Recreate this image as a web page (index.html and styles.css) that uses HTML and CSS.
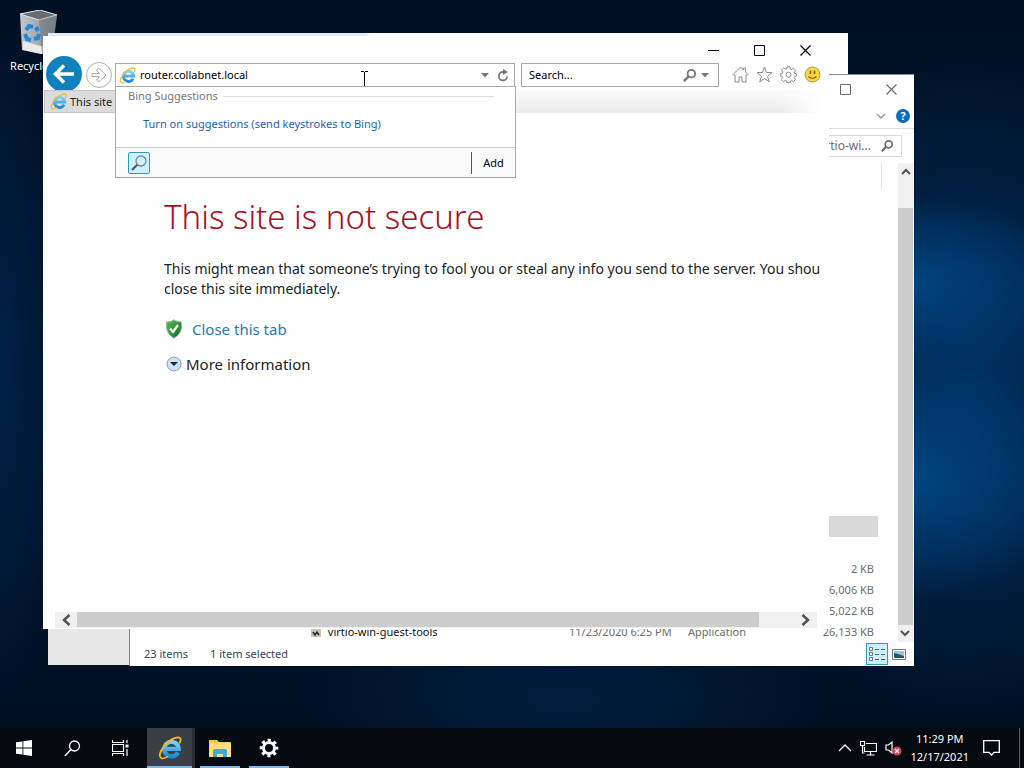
FILE: index.html
```html
<!DOCTYPE html>
<html lang="en">
<head>
    <meta charset="UTF-8">
    <meta name="viewport" content="width=device-width, initial-scale=1.0">
    <title>Desktop</title>
    <link rel="stylesheet" href="styles.css">
</head>
<body>
    <!-- shared icons -->
    <svg class="defs" aria-hidden="true">
        <defs>
            <linearGradient id="ie-blue" x1="0" y1="0" x2="0" y2="1">
                <stop offset="0" stop-color="#7fd6fb"/>
                <stop offset="1" stop-color="#1c8ad6"/>
            </linearGradient>
            <linearGradient id="shield-green" x1="0" y1="0" x2="1" y2="1">
                <stop offset="0" stop-color="#5cc05a"/>
                <stop offset="1" stop-color="#0c6b1d"/>
            </linearGradient>
            <linearGradient id="bin-side" x1="0" y1="0" x2="1" y2="0">
                <stop offset="0" stop-color="#c3c8cd"/>
                <stop offset="1" stop-color="#80868c"/>
            </linearGradient>
        </defs>
        <symbol id="ie" viewBox="0 0 24 24">
            <path d="M20 16.500a7.300 7.300 0 1 1 .8-3.700H8" fill="none" stroke="url(#ie-blue)" stroke-width="4.200"/>
            <path d="M3.400 22.200C-.8 20 4.200 10.200 11 5.200 16 1.500 21.400.300 22.400 2.600c.5 1.200.1 2.700-.6 4" fill="none" stroke="#f2b92b" stroke-width="1.800" stroke-linecap="round"/>
            <path d="M3.400 22.200c1.800.8 4-.200 6-1.600" fill="none" stroke="#f2b92b" stroke-width="1.600" stroke-linecap="round"/>
        </symbol>
        <symbol id="magnifier" viewBox="0 0 16 16">
            <circle cx="10" cy="6" r="4" fill="none" stroke="currentColor" stroke-width="2"/>
            <path d="M7 9l-5 5" stroke="currentColor" stroke-width="2.500"/>
        </symbol>
        <symbol id="maximize" viewBox="0 0 11 11">
            <path d="M.5.5h10v10H.5z" fill="none" stroke="currentColor"/>
        </symbol>
        <symbol id="close" viewBox="0 0 11 11">
            <path d="M.5.5l10 10m0-10l-10 10" stroke="currentColor" stroke-width="1.200"/>
        </symbol>
        <symbol id="chevron" viewBox="0 0 12 12">
            <path d="M2 8l4-4 4 4" fill="none" stroke="currentColor" stroke-width="2"/>
        </symbol>
    </svg>

    <main class="desktop">
        <a class="shortcut" href="#recycle">
            <svg width="40" height="44" viewBox="0 0 40 44">
                <path d="M1 4l20-4 17 5-5 37-10 2-20-4z" fill="url(#bin-side)"/>
                <path d="M1 4l20-4 17 5-18 5z" fill="#666c72" stroke="#e2e5e8"/>
                <path d="M4 31l14 4 14 3-1 4-9 2-18-4z" fill="#eee9ea"/>
                <path d="M20 10l3 34 10-2 5-37z" fill="#70767c" opacity=".6"/>
                <path d="M7 20l3-4 4 1M6 24l2 5 4 1m3-1l4-1 1-4m-1-3l-2-4" fill="none" stroke="#2388d8" stroke-width="4"/>
            </svg>
            <span>Recycle Bin</span>
        </a>

        <section class="window settings">
            <div class="settings-side"></div>
        </section>

        <section class="window explorer">
            <div class="explorer-caption">
                <button class="icon-btn" aria-label="Maximize"><svg width="11" height="11"><use href="#maximize"/></svg></button>
                <button class="icon-btn" aria-label="Close"><svg width="11" height="11"><use href="#close"/></svg></button>
            </div>
            <div class="ribbon">
                <button class="icon-btn" aria-label="Expand ribbon">
                    <svg width="10" height="6" viewBox="0 0 10 6"><path d="M1 1l4 4 4-4" fill="none" stroke="#999" stroke-width="1.300"/></svg>
                </button>
                <button class="help" aria-label="Help">?</button>
            </div>
            <div class="explorer-search">
                <label class="explorer-field">
                    <input class="explorer-input" type="text" aria-label="Search folder" value="Search virtio-wi...">
                    <svg width="14" height="14"><use href="#magnifier"/></svg>
                </label>
            </div>
            <div class="explorer-body">
                <div class="files">
                    <div class="files-head"></div>
                    <table class="file-table">
                        <tbody>
                            <tr class="selected"><td></td><td></td><td></td><td></td></tr>
                            <tr><td></td><td></td><td></td><td></td></tr>
                            <tr><td></td><td></td><td></td><td class="size">2 KB</td></tr>
                            <tr><td></td><td></td><td></td><td class="size">6,006 KB</td></tr>
                            <tr><td></td><td></td><td></td><td class="size">5,022 KB</td></tr>
                            <tr>
                                <td class="name">
                                    <svg width="10" height="12" viewBox="0 0 10 12"><path d="M0 0h10v10H0z" fill="#c4c4bd"/><path d="M2 5l2 3 2-3 2 3" fill="none" stroke="#222" stroke-width="1.500"/></svg>
                                    virtio-win-guest-tools
                                </td>
                                <td class="date">11/23/2020 6:25 PM</td>
                                <td class="type">Application</td>
                                <td class="size">26,133 KB</td>
                            </tr>
                        </tbody>
                    </table>
                </div>
                <div class="vscroll">
                    <button class="icon-btn" aria-label="Scroll up"><svg width="12" height="12"><use href="#chevron"/></svg></button>
                    <div class="vthumb"></div>
                    <button class="icon-btn flip" aria-label="Scroll down"><svg width="12" height="12"><use href="#chevron"/></svg></button>
                </div>
            </div>
            <footer class="status">
                <span>23 items</span>
                <span>1 item selected</span>
                <button class="view-btn active" aria-label="Details view">
                    <svg width="18" height="14" viewBox="0 0 18 14">
                        <path d="M1.500.500h3v3h-3zM1.500 5.500h3v3h-3zM1.500 10.500h3v3h-3z" fill="#fff" stroke="#68777f"/>
                        <path d="M7 2.500h4m2 0h4M7 7.500h4m2 0h4M7 12.500h4m2 0h4" stroke="#506872"/>
                    </svg>
                </button>
                <button class="view-btn" aria-label="Thumbnail view">
                    <svg width="14" height="11" viewBox="0 0 14 11">
                        <path d="M.5.500h13v10H.5z" fill="#fff" stroke="#5f8193"/>
                        <path d="M2 2h10v7H2z" fill="#9cc7e4"/>
                        <path d="M2 4l4 1 6 2v2H2z" fill="#33505c"/>
                    </svg>
                </button>
            </footer>
        </section>

        <section class="window browser">
            <div class="caption">
                <button class="icon-btn" aria-label="Minimize"><svg width="11" height="11" viewBox="0 0 11 11"><path d="M0 5.500h11" stroke="#000"/></svg></button>
                <button class="icon-btn" aria-label="Maximize"><svg width="11" height="11"><use href="#maximize"/></svg></button>
                <button class="icon-btn" aria-label="Close"><svg width="11" height="11"><use href="#close"/></svg></button>
            </div>

            <div class="nav">
                <button class="back" aria-label="Back">
                    <svg width="22" height="20" viewBox="0 0 22 20"><path d="M21 10H3M11 1.500L2.500 10l8.500 8.500" fill="none" stroke="#fff" stroke-width="3.500"/></svg>
                </button>
                <button class="forward" aria-label="Forward">
                    <svg width="16" height="14" viewBox="0 0 16 14"><path d="M1 5.500h7.500L5.500 2l1.500-1.300h1.500L15 7l-6.500 6.300H7L5.500 12l3-3.500H1z" fill="none" stroke="#aaa"/></svg>
                </button>
                <div class="address">
                    <svg width="17" height="17"><use href="#ie"/></svg>
                    <input class="address-input" type="text" aria-label="Address" value="router.collabnet.local">
                    <button class="icon-btn" aria-label="Show address list"><svg width="8" height="5" viewBox="0 0 8 5"><path d="M0 0h8L4 4.500z" fill="#777"/></svg></button>
                    <button class="icon-btn" aria-label="Refresh">
                        <svg width="12" height="13" viewBox="0 0 12 13"><path d="M7.500 3H6a4.200 4.200 0 1 0 4.200 4.500" fill="none" stroke="#777" stroke-width="1.800"/><path d="M6 0l5 3-5 3z" fill="#777"/></svg>
                    </button>
                    <div class="suggest">
                        <div class="suggest-title">Bing Suggestions</div>
                        <a class="suggest-link" href="#suggestions">Turn on suggestions (send keystrokes to Bing)</a>
                        <div class="suggest-bar">
                            <button class="provider" aria-label="Bing">
                                <svg width="18" height="18" viewBox="0 0 18 18">
                                    <path d="M7.500 10.500L2 16" stroke="#555" stroke-width="2.200"/>
                                    <circle cx="11" cy="7" r="5" fill="#d4f0fc" stroke="#72889f" stroke-width="1.300"/>
                                </svg>
                            </button>
                            <button class="add">Add</button>
                        </div>
                    </div>
                </div>
                <div class="search">
                    <input class="search-input" type="text" aria-label="Search" placeholder="Search...">
                    <button class="icon-btn" aria-label="Search"><svg width="15" height="15"><use href="#magnifier"/></svg></button>
                    <button class="icon-btn" aria-label="Search options"><svg width="8" height="5" viewBox="0 0 8 5"><path d="M0 0h8L4 4.500z" fill="#777"/></svg></button>
                </div>
                <div class="tools">
                    <button class="icon-btn" aria-label="Home">
                        <svg width="17" height="17" viewBox="0 0 17 17"><path d="M1 8.500l7.500-7.500 3 3V2h2v4l2.500 2.500-1 1-1-.8V16H10v-5H7v5H3V8.700l-1 .8z" fill="none" stroke="#8c8c8c"/></svg>
                    </button>
                    <button class="icon-btn" aria-label="Favorites">
                        <svg width="17" height="17" viewBox="0 0 17 17"><path d="M8.500 1l2 5.500H16l-4.500 3.700 1.800 5.800-4.800-3.500L3.700 16l1.800-5.800L1 6.500h5.500z" fill="none" stroke="#8c8c8c"/></svg>
                    </button>
                    <button class="icon-btn" aria-label="Tools">
                        <svg width="17" height="17" viewBox="0 0 17 17"><path d="M7 .8h3l.4 2.200 1.200.5 2-1.300 2 2-1.300 2 .5 1.200 1.800.4v2l-1.800.5-.6 1.300 1.200 2-2 2-2-1.200-1 .5-.4 2H7l-.5-2-1.200-.5-2 1.200-2-2 1.300-2-.5-1.300L.6 10V7.500l1.700-.4.5-1.200-1.300-2 2-2 2 1.300L6.600 3z" fill="none" stroke="#8c8c8c"/><circle cx="8.500" cy="8.700" r="2.500" fill="none" stroke="#8c8c8c"/></svg>
                    </button>
                    <button class="icon-btn" aria-label="Send a smile">
                        <svg width="17" height="17" viewBox="0 0 17 17"><circle cx="8.500" cy="8.500" r="7.500" fill="#fbd83a" stroke="#a99a55"/><path d="M6.500 4.500V8m4-3.500V8" stroke="#806515" stroke-width="1.600"/><path d="M4.500 10.500q4 3.500 8 0" fill="none" stroke="#806515" stroke-width="1.200"/></svg>
                    </button>
                </div>
            </div>

            <div class="tabs">
                <button class="tab"><svg width="17" height="17"><use href="#ie"/></svg>This site</button>
            </div>

            <article class="page">
                <h1 class="page-title">This site is not secure</h1>
                <p class="page-text">This might mean that someone’s trying to fool you or steal any info you send to the server. You shou<br>close this site immediately.</p>
                <a class="page-close" href="#close">
                    <svg width="18" height="20" viewBox="0 0 18 20">
                        <path d="M9 .8c2.500 1.700 5 2.200 7.500 2.200.5 7-.5 12-7.500 16.200C2 15 1 10 1.500 3 4 3 6.500 2.500 9 .8z" fill="url(#shield-green)" stroke="#a4b5a5"/>
                        <path d="M5 9.500l3 3.500 5-7" fill="none" stroke="#fff" stroke-width="2.200"/>
                    </svg>
                    Close this tab
                </a>
                <button class="page-more">
                    <svg width="16" height="16" viewBox="0 0 16 16"><circle cx="8" cy="8" r="7" fill="#cfe2f5" stroke="#8a9db3"/><path d="M4 6h8l-4 4z" fill="#10284a"/></svg>
                    More information
                </button>
            </article>

            <div class="hscroll">
                <button class="icon-btn left" aria-label="Scroll left"><svg width="10" height="12" viewBox="0 0 10 12"><path d="M8.500 1L3 6l5.500 5" fill="none" stroke="#505050" stroke-width="2.500"/></svg></button>
                <div class="htrack"><div class="hthumb"></div></div>
                <button class="icon-btn right" aria-label="Scroll right"><svg width="10" height="12" viewBox="0 0 10 12"><path d="M1.500 1L7 6l-5.500 5" fill="none" stroke="#505050" stroke-width="2.500"/></svg></button>
            </div>
        </section>

        <svg class="pointer" width="7" height="16" viewBox="0 0 7 16"><path d="M0 .5h3m1 0h3M3.500 1v14M0 15.500h3m1 0h3" stroke="#000"/></svg>
    </main>

    <nav class="taskbar">
        <button class="task" aria-label="Start">
            <svg width="16" height="16" viewBox="0 0 16 16"><path d="M0 2.300L6.500 1.400v6.200H0zM7.300 1.300L16 0v7.600H7.300zM0 8.400h6.500v6.200L0 13.700zM7.300 8.400H16V16l-8.700-1.300z" fill="#fff"/></svg>
        </button>
        <button class="task" aria-label="Search">
            <svg width="17" height="17" viewBox="0 0 17 17"><circle cx="10.500" cy="6" r="5" fill="none" stroke="#fff" stroke-width="1.300"/><path d="M7 9.500L.8 16" stroke="#fff" stroke-width="1.500"/></svg>
        </button>
        <button class="task" aria-label="Task view">
            <svg width="17" height="16" viewBox="0 0 17 16"><path d="M.5 0v2.500h11V0M.5 16v-2.500h11V16M.5 4.500h11v7H.5zM15 0v3m0 6v7" fill="none" stroke="#fff" stroke-width="1.200"/><path d="M13.500 4.500h3v3h-3z" fill="#fff"/></svg>
        </button>
        <button class="task app current" aria-label="Internet Explorer"><svg width="24" height="24"><use href="#ie"/></svg></button>
        <button class="task app" aria-label="File Explorer">
            <svg width="22" height="18" viewBox="0 0 22 18"><path d="M0 1h8l2 2h11q1 0 1 1v13H0z" fill="#f5c84f"/><path d="M1 4h21v14H0z" fill="#fddf82"/><path d="M4 18v-6q0-2 2-2h10q2 0 2 2v6h-4v-3H8v3z" fill="#3fa9d8"/></svg>
        </button>
        <button class="task app" aria-label="Settings">
            <svg width="20" height="20" viewBox="0 0 20 20"><circle cx="10" cy="10" r="5.500" fill="none" stroke="#fff" stroke-width="3"/><circle cx="10" cy="10" r="7.800" fill="none" stroke="#fff" stroke-width="3" stroke-dasharray="3.100 3.026" stroke-dashoffset="1.550"/></svg>
        </button>
        <div class="tray">
            <button class="icon-btn" aria-label="Show hidden icons"><svg width="14" height="8" viewBox="0 0 14 8"><path d="M1 7l6-6 6 6" fill="none" stroke="#fff" stroke-width="1.300"/></svg></button>
            <button class="icon-btn" aria-label="Network">
                <svg width="17" height="15" viewBox="0 0 17 15"><path d="M6 2.500h10.500v8H4.500V6M10.500 10.500v3m-4 .5h8M.5.500h4v4h-4zM2.500 4.500V12h2" fill="none" stroke="#fff" stroke-width="1.200"/></svg>
            </button>
            <button class="icon-btn" aria-label="Volume">
                <svg width="17" height="16" viewBox="0 0 17 16"><path d="M1 5h2.500L7 2v11l-3.500-3H1z" fill="none" stroke="#fff" stroke-width="1.200"/><circle cx="12" cy="11" r="4.500" fill="#d4404d"/><path d="M10 9l4 4m0-4l-4 4" stroke="#fff" stroke-width="1.200"/></svg>
            </button>
            <time class="clock" datetime="2021-12-17T23:29">11:29 PM<br>12/17/2021</time>
            <button class="icon-btn" aria-label="Notifications"><svg width="17" height="16" viewBox="0 0 17 16"><path d="M.7.700h15.600v11.600H11L8.500 15 6 12.300H.7z" fill="none" stroke="#fff" stroke-width="1.300"/></svg></button>
        </div>
        <button class="show-desktop" aria-label="Show desktop"></button>
    </nav>
</body>
</html>
```
FILE: styles.css
```css
* {
    box-sizing: border-box;
}
body {
    display: flex;
    flex-direction: column;
    height: 100vh;
    margin: 0;
    overflow: hidden;
    font-family: "Noto Sans", "Open Sans", sans-serif;
    font-size: 11px;
    line-height: 16px;
    color: #222;
}
button, input {
    margin: 0;
    padding: 0;
    border: none;
    background: none;
    font: inherit;
    color: inherit;
}
input {
    min-width: 0;
    outline: none;
}
a {
    text-decoration: none;
}
svg {
    flex: none;
}
.defs {
    position: absolute;
    width: 0;
    height: 0;
}
.icon-btn {
    display: flex;
    align-items: center;
    justify-content: center;
}

/* desktop */
.desktop {
    position: relative;
    flex: 1;
    background:
        radial-gradient(ellipse 170px 90px at 89% 39%, #00447f, transparent),
        radial-gradient(ellipse 190px 120px at 88% 66%, #004682, transparent),
        radial-gradient(ellipse 240px 330px at 94% 53%, #003263, transparent),
        radial-gradient(ellipse 60px 330px at 0% 50%, #002248, transparent),
        radial-gradient(ellipse 260px 100px at 55% 96%, #001f40, transparent),
        linear-gradient(#001024, #00152f 60%, #001024);
}
.shortcut {
    position: absolute;
    top: 10px;
    left: 0;
    display: flex;
    flex-direction: column;
    align-items: center;
    gap: 4px;
    width: 78px;
    color: #fff;
}
.window {
    position: absolute;
    display: flex;
    flex-direction: column;
    background: #fff;
}

/* settings window */
.settings {
    top: 33px;
    right: 176px;
    bottom: 63px;
    left: 48px;
    background: linear-gradient(90deg, #e3eaf1 318px, #fff 322px);
}
.settings::before {
    content: "";
    height: 3px;
}
.settings-side {
    flex: 1;
    border-left: 82px solid #e6e6e6;
    background: #fff;
}

/* explorer window */
.explorer {
    top: 74px;
    right: 110px;
    bottom: 62px;
    left: 129px;
    border-top: 1px solid #8a8a8a;
    border-left: 1px solid #8a8a8a;
    color: #6d6d6d;
}
.explorer-caption {
    display: flex;
    justify-content: flex-end;
    height: 28px;
}
.explorer-caption .icon-btn {
    width: 46px;
}
.ribbon {
    display: flex;
    align-items: center;
    justify-content: flex-end;
    gap: 10px;
    height: 26px;
    padding-right: 4px;
    border-bottom: 1px solid #ddd;
}
.help {
    width: 14px;
    height: 14px;
    border-radius: 50%;
    background: #0f6cbd;
    color: #fff;
    font-weight: 700;
    line-height: 14px;
}
.explorer-search {
    display: flex;
    justify-content: flex-end;
    padding: 6px 12px;
}
.explorer-field {
    display: flex;
    align-items: center;
    width: 150px;
    height: 22px;
    padding: 0 7px;
    border: 1px solid #d9d9d9;
}
.explorer-input {
    flex: 1;
    padding-right: 9px;
    text-align: right;
    font-size: 12px;
}
.explorer-body {
    display: flex;
    flex: 1;
    min-height: 0;
}
.files {
    display: flex;
    flex: 1;
    flex-direction: column;
    justify-content: space-between;
    padding-right: 16px;
}
.files-head {
    height: 25px;
    border-right: 1px solid #e5e5e5;
}
.file-table {
    margin: 0 4px 0 176px;
    border-collapse: collapse;
    table-layout: fixed;
}
.file-table td {
    height: 21px;
    padding: 0;
    white-space: nowrap;
}
.file-table .selected {
    background: #d9d9d9;
}
.file-table .name {
    width: 263px;
    padding-left: 5px;
    color: #111;
}
.name svg {
    margin-right: 4px;
    vertical-align: middle;
}
.date {
    width: 119px;
}
.file-table .size {
    padding-right: 4px;
    text-align: right;
}
.vscroll {
    display: flex;
    flex-direction: column;
    width: 16px;
    padding-right: 1px;
    background: #f0f0f0;
    color: #505050;
}
.vscroll .icon-btn {
    height: 17px;
}
.vthumb {
    flex: 1;
    margin-top: 28px;
    background: #cdcdcd;
}
.flip {
    transform: rotate(180deg);
}
.status {
    display: flex;
    align-items: center;
    gap: 22px;
    height: 24px;
    padding: 0 8px 0 14px;
    color: #35465a;
}
.view-btn {
    display: flex;
    align-items: center;
    justify-content: center;
    height: 22px;
    margin-left: -18px;
}
.view-btn.active {
    width: 22px;
    margin-left: auto;
    border: 1px solid #2c9db5;
    background: #c9effb;
}

/* browser window */
.browser {
    top: 36px;
    right: 195px;
    bottom: 99px;
    left: 43px;
}
.caption {
    display: flex;
    align-items: flex-end;
    justify-content: flex-end;
    height: 20px;
    padding-right: 1px;
    color: #000;
}
.caption .icon-btn {
    width: 46px;
}
.nav {
    display: flex;
    align-items: flex-start;
    height: 34px;
    padding: 0 8px 0 3px;
}
.back {
    display: flex;
    align-items: center;
    justify-content: center;
    width: 36px;
    height: 36px;
    border-radius: 50%;
    background: #1081bd;
}
.forward {
    display: flex;
    align-items: center;
    justify-content: center;
    width: 26px;
    height: 26px;
    margin: 6px 3px 0 4px;
    border: 1px solid #b0b0b0;
    border-radius: 50%;
}
.address, .search {
    display: flex;
    align-items: center;
    height: 24px;
    margin-top: 7px;
    border: 1px solid #a9a9b0;
    color: #000;
}
.address {
    position: relative;
    flex: 1;
    padding: 0 5px 0 3px;
    gap: 8px;
}
.address-input {
    flex: 1;
    margin-left: -4px;
}
.search {
    flex: 0 1 198px;
    min-width: 0;
    margin-left: 6px;
    padding: 0 9px 0 7px;
    gap: 4px;
}
.search .icon-btn {
    color: #777;
}
.search-input {
    flex: 1;
}
.search-input::placeholder {
    color: #000;
}
.tools {
    display: flex;
    gap: 7px;
    margin: 10px 0 0 13px;
}
.suggest {
    position: absolute;
    z-index: 2;
    top: 22px;
    right: -2px;
    left: -1px;
    border: 1px solid #a9a9b0;
    background: #fff;
}
.suggest-title {
    display: flex;
    align-items: center;
    gap: 5px;
    padding: 1px 21px 0 12px;
    color: #777;
}
.suggest-title::after {
    content: "";
    flex: 1;
    height: 1px;
    background: #ddd;
}
.suggest-link {
    display: block;
    padding: 12px 27px 15px;
    color: #1b63b0;
}
.suggest-bar {
    display: flex;
    align-items: center;
    justify-content: space-between;
    height: 30px;
    padding-left: 12px;
    border-top: 1px solid #ccc;
    background: #f9f9f9;
}
.provider {
    display: flex;
    align-items: center;
    justify-content: center;
    width: 22px;
    height: 22px;
    border: 1px solid #2c9db5;
    border-radius: 2px;
    background: #cdf2fb;
}
.add {
    width: 44px;
    height: 22px;
    border-left: 1px solid #555;
}
.tabs {
    position: relative;
    height: 23px;
    padding-left: 1px;
    background:
        linear-gradient(90deg, transparent 94%, #fff 99%),
        linear-gradient(#fbfbfb, #ececec);
}
.tab {
    display: flex;
    align-items: center;
    gap: 3px;
    width: 72px;
    height: 23px;
    padding-left: 5px;
    border: 1px solid #c4c4c4;
    background: #dcdcdc;
    white-space: nowrap;
}
.page {
    display: flex;
    flex: 1;
    flex-direction: column;
    align-items: flex-start;
    min-height: 0;
    overflow: hidden;
    padding: 80px 0 0 121px;
    font-size: 14px;
    line-height: 20px;
}
.page-title {
    margin: 0;
    font-size: 33px;
    font-weight: 300;
    line-height: 48px;
    color: #a80f22;
    white-space: nowrap;
}
.page-text {
    margin: 18px 0 20px;
    white-space: nowrap;
}
.page-close {
    display: flex;
    align-items: center;
    gap: 9px;
    padding-left: 1px;
    font-size: 15px;
    color: #1f78b4;
}
.page-more {
    display: flex;
    align-items: center;
    gap: 4px;
    margin-top: 15px;
    padding-left: 2px;
    font-size: 15px;
}
.hscroll {
    display: flex;
    height: 17px;
    margin: 0 12px;
    border-bottom: 1px solid #fff;
    background: #f0f0f0;
}
.hscroll .icon-btn {
    width: 22px;
}
.htrack {
    flex: 1;
}
.hthumb {
    width: 95%;
    height: 15px;
    background: #cdcdcd;
}
.pointer {
    position: absolute;
    top: 71px;
    left: 361px;
}

/* taskbar */
.taskbar {
    display: flex;
    height: 40px;
    background: #050a10;
    color: #fff;
}
.task {
    display: flex;
    align-items: center;
    justify-content: center;
    width: 48px;
}
.app {
    margin-right: 1px;
    background: linear-gradient(#76b9ed, #76b9ed) center bottom / 40px 2px no-repeat;
}
.current {
    margin-left: 3px;
    border-right: 3px solid #292e33;
    background: linear-gradient(#76b9ed, #76b9ed) center bottom / 100% 2px no-repeat #3a3f45;
}
.tray {
    display: flex;
    align-items: center;
    gap: 8px;
    margin-left: auto;
    padding-right: 19px;
}
.clock {
    margin-right: 6px;
    line-height: 18px;
    text-align: center;
}
.show-desktop {
    width: 5px;
    border-left: 1px solid #5a5f64;
}
```
